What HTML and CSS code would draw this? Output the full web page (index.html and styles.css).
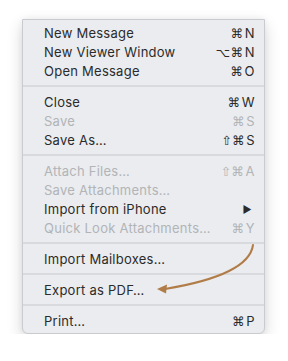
FILE: index.html
```html
<!DOCTYPE html>
<html lang="en">
<head>
    <meta charset="UTF-8">
    <meta name="viewport" content="width=device-width, initial-scale=1.0">
    <title>File Menu</title>
    <link rel="stylesheet" href="styles.css">
</head>
<body>
    <div class="menu">
        <div class="item"><span>New Message</span><span class="keys"><span class="mod">⌘</span>N</span></div>
        <div class="item"><span>New Viewer Window</span><span class="keys"><span class="mod">⌥⌘</span>N</span></div>
        <div class="item"><span>Open Message</span><span class="keys"><span class="mod">⌘</span>O</span></div>
        <div class="sep"></div>
        <div class="item"><span>Close</span><span class="keys"><span class="mod">⌘</span>W</span></div>
        <div class="item disabled"><span>Save</span><span class="keys"><span class="mod">⌘</span>S</span></div>
        <div class="item"><span>Save As…</span><span class="keys"><span class="mod">⇧⌘</span>S</span></div>
        <div class="sep"></div>
        <div class="item disabled"><span>Attach Files…</span><span class="keys"><span class="mod">⇧⌘</span>A</span></div>
        <div class="item disabled"><span>Save Attachments…</span></div>
        <div class="item"><span>Import from iPhone</span><span class="submenu">▶</span></div>
        <div class="item disabled"><span>Quick Look Attachments…</span><span class="keys"><span class="mod">⌘</span>Y</span></div>
        <div class="sep"></div>
        <div class="item"><span>Import Mailboxes…</span></div>
        <div class="sep"></div>
        <div class="item"><span>Export as PDF…</span></div>
        <div class="sep"></div>
        <div class="item"><span>Print…</span><span class="keys"><span class="mod">⌘</span>P</span></div>

        <svg class="callout" width="120" height="60" viewBox="0 0 120 60">
            <path d="M106 2 Q 102 32 18 46" fill="none" stroke="#b17c47" stroke-width="2" stroke-linecap="round"/>
            <path d="M10 46 L20 41.5 L19 50.5 Z" fill="#b17c47"/>
        </svg>
    </div>
</body>
</html>
```

FILE: styles.css
```css
body {
    margin: 0;
    padding: 19px 0 0 22px;
    background-color: #ffffff;
    font-family: Inter, "Noto Sans", sans-serif;
}
.menu {
    position: relative;
    width: 241px;
    padding: 3px 0;
    background-color: #eaecef;
    border: 1px solid #c9cbce;
    border-radius: 0 0 6px 6px;
    box-shadow: 0 6px 16px rgba(0,0,0,0.16), 0 0 6px rgba(0,0,0,0.06);
}
.item {
    display: flex;
    justify-content: space-between;
    align-items: center;
    height: 19px;
    padding: 0 9px 0 21px;
    font-size: 13px;
    letter-spacing: 0.25px;
    color: #2b2b2b;
}
.item.disabled {
    color: #b2b4b7;
}
.keys {
    letter-spacing: 0.5px;
}
.mod {
    font-family: "DejaVu Sans", sans-serif;
    font-size: 12.5px;
    margin-right: 1px;
}
.submenu {
    font-size: 10px;
    margin-right: 3px;
}
.sep {
    height: 2px;
    margin: 5px 0;
    background-color: #d8dadd;
}
.callout {
    position: absolute;
    left: 124px;
    top: 223px;
}
```
